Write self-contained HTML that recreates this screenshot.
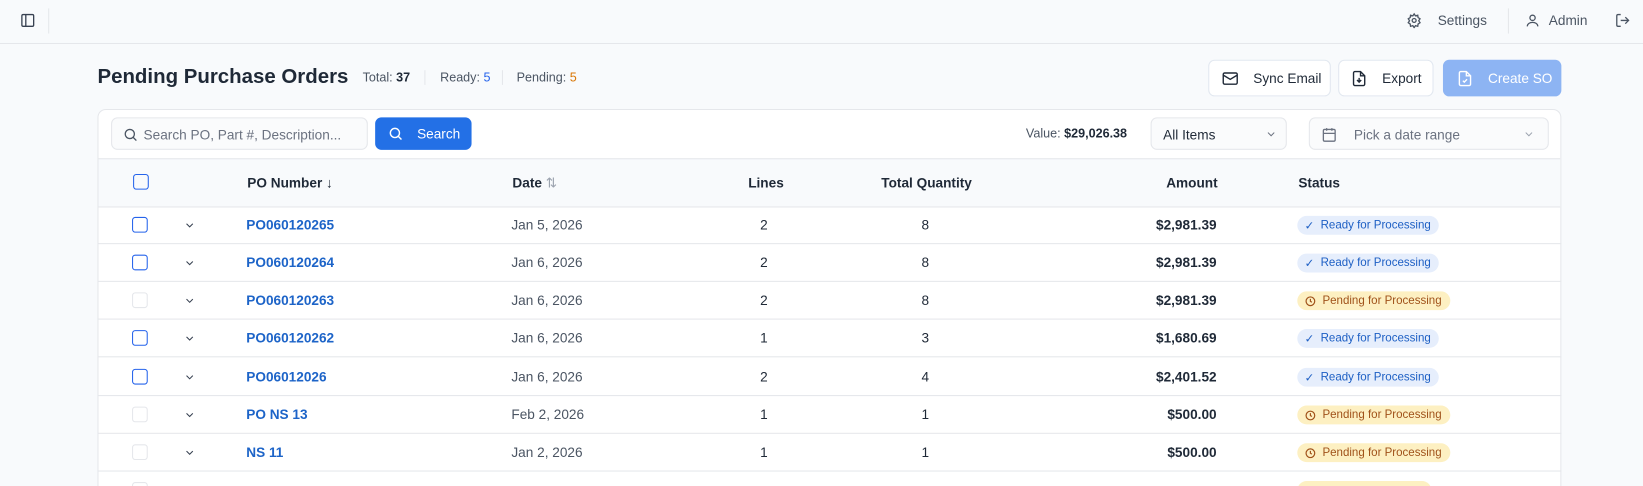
<!DOCTYPE html>
<html style="width:1643px;height:486px;overflow:hidden"><head><style>
*{box-sizing:border-box;margin:0;padding:0}
body{width:1643px;height:486px;overflow:hidden;background:#f8fafc;font-family:"Liberation Sans",sans-serif;color:#1f2937;font-size:13px;position:relative}
#w{position:absolute;left:0;top:0;width:1568px;height:464px;overflow:hidden;transform:scale(1.0479);transform-origin:0 0}
.abs{position:absolute}
.top{position:absolute;left:0;top:0;width:1568px;height:42px;border-bottom:1px solid #e5e7eb}
.btn{position:absolute;top:57px;height:35px;border:1px solid #e2e8f0;border-radius:6px;background:#fff;display:flex;align-items:center;font-size:13px;color:#1f2937}
.card{position:absolute;left:93px;top:104px;width:1397px;height:400px;background:#fff;border:1px solid #e5e7eb;border-radius:8px;overflow:hidden}
.hdr{position:absolute;left:0;top:46px;width:100%;height:47px;background:#f8fafc;border-top:1px solid #e5e7eb;border-bottom:1px solid #e5e7eb;font-weight:bold;font-size:13px;color:#1f2937}
.row{position:absolute;left:0;width:100%;height:36px;border-bottom:1px solid #e5e7eb}
.c{position:absolute;top:0;line-height:35px}
.cb{position:absolute;left:33px;top:10px;width:15px;height:15px;border:1.5px solid #2563eb;border-radius:3px}
.cb.d{border:1px solid #e5e7eb}
.po{left:142px;color:#1d64c8;font-weight:bold}
.dt{left:395px;color:#4b5563}
.ln{left:620px;width:32px;text-align:center}
.tq{left:760px;width:60px;text-align:center}
.am{left:960px;width:108px;text-align:right;font-weight:bold}
.badge{position:absolute;left:1145px;top:9px;height:18px;border-radius:9px;font-size:11px;display:flex;align-items:center;padding:0 8px 0 7px;gap:6px}
.r{background:#e6eefc;color:#1d5fc4}
.p{background:#fdf0c2;color:#a0521a}
</style></head><body><div id="w">
<div class="top">
 <svg class="abs" style="left:19px;top:12px" width="15" height="15" viewBox="0 0 24 24" fill="none" stroke="#374151" stroke-width="2"><rect x="3" y="3" width="18" height="18" rx="2"/><path d="M9 3v18"/></svg>
 <div class="abs" style="left:46px;top:8px;width:1px;height:24px;background:#e5e7eb"></div>
 <svg class="abs" style="left:1342px;top:12px" width="15" height="15" viewBox="0 0 24 24" fill="none" stroke="#4b5563" stroke-width="2"><circle cx="12" cy="12" r="3"/><path d="M12 2l2 3 3.5-1 .5 3.5 3 2-2 3 2 3-3 2-.5 3.5-3.5-1-2 3-2-3-3.5 1L6 17.5l-3-2 2-3-2-3 3-2L6.5 4 10 5z"/></svg>
 <div class="abs" style="left:1372px;top:12px;color:#4b5563">Settings</div>
 <div class="abs" style="left:1439px;top:8px;width:1px;height:24px;background:#e5e7eb"></div>
 <svg class="abs" style="left:1455px;top:12px" width="15" height="15" viewBox="0 0 24 24" fill="none" stroke="#4b5563" stroke-width="2"><circle cx="12" cy="8" r="4"/><path d="M4 21c0-4 4-6 8-6s8 2 8 6"/></svg>
 <div class="abs" style="left:1478px;top:12px;color:#4b5563">Admin</div>
 <svg class="abs" style="left:1541px;top:12px" width="15" height="15" viewBox="0 0 24 24" fill="none" stroke="#4b5563" stroke-width="2"><path d="M9 21H5a2 2 0 0 1-2-2V5a2 2 0 0 1 2-2h4M16 17l5-5-5-5M21 12H9"/></svg>
</div>
<div class="abs" style="left:93px;top:62px;font-size:19.5px;font-weight:bold;color:#1f2937">Pending Purchase Orders</div>
<div class="abs" style="left:346px;top:67px;font-size:12px;color:#4b5563">Total: <b style="color:#1f2937">37</b></div>
<div class="abs" style="left:405px;top:67px;width:1px;height:14px;background:#e5e7eb"></div>
<div class="abs" style="left:420px;top:67px;font-size:12px;color:#4b5563">Ready: <b style="color:#2563eb;font-weight:normal">5</b></div>
<div class="abs" style="left:479px;top:67px;width:1px;height:14px;background:#e5e7eb"></div>
<div class="abs" style="left:493px;top:67px;font-size:12px;color:#4b5563">Pending: <span style="color:#d97706">5</span></div>
<div class="btn" style="left:1153px;width:117px"><svg style="margin:0 14px 0 12px" width="16" height="16" viewBox="0 0 24 24" fill="none" stroke="#1f2937" stroke-width="2"><rect x="2" y="4" width="20" height="16" rx="2"/><path d="M22 7l-10 6L2 7"/></svg>Sync Email</div>
<div class="btn" style="left:1277px;width:91px"><svg style="margin:0 14px 0 11px" width="16" height="16" viewBox="0 0 24 24" fill="none" stroke="#1f2937" stroke-width="2"><path d="M14 2H6a2 2 0 0 0-2 2v16a2 2 0 0 0 2 2h12a2 2 0 0 0 2-2V8z"/><path d="M14 2v6h6M12 11v6M9 14l3 3 3-3"/></svg>Export</div>
<div class="btn" style="left:1377px;width:113px;background:#8db4f3;border-color:#8db4f3;color:#fff"><svg style="margin:0 14px 0 12px" width="16" height="16" viewBox="0 0 24 24" fill="none" stroke="#fff" stroke-width="2"><path d="M14 2H6a2 2 0 0 0-2 2v16a2 2 0 0 0 2 2h12a2 2 0 0 0 2-2V8z"/><path d="M14 2v6h6M9 15l2 2 4-4"/></svg>Create SO</div>
<div class="card">
 <div class="abs" style="left:12px;top:7px;width:245px;height:31px;border:1px solid #e5e7eb;border-radius:6px;background:#fafbfc"><svg class="abs" style="left:10px;top:8px" width="15" height="15" viewBox="0 0 24 24" fill="none" stroke="#4b5563" stroke-width="2"><circle cx="11" cy="11" r="7"/><path d="M21 21l-5-5"/></svg><span class="abs" style="left:30px;top:8px;color:#6b7280">Search PO, Part #, Description...</span></div>
 <div class="abs" style="left:264px;top:7px;width:92px;height:31px;border-radius:6px;background:#2370e6;color:#fff"><svg class="abs" style="left:12px;top:8px" width="15" height="15" viewBox="0 0 24 24" fill="none" stroke="#fff" stroke-width="2.2"><circle cx="11" cy="11" r="7"/><path d="M21 21l-5-5"/></svg><span class="abs" style="left:40px;top:8px">Search</span></div>
 <div class="abs" style="left:885px;top:15px;font-size:12px;color:#4b5563">Value: <b style="color:#1f2937">$29,026.38</b></div>
 <div class="abs" style="left:1004px;top:7px;width:130px;height:31px;border:1px solid #e5e7eb;border-radius:6px;background:#fafbfc"><span class="abs" style="left:11px;top:8px">All Items</span><svg class="abs" style="left:108px;top:9px" width="12" height="12" viewBox="0 0 24 24" fill="none" stroke="#6b7280" stroke-width="2"><path d="M6 9l6 6 6-6"/></svg></div>
 <div class="abs" style="left:1155px;top:7px;width:229px;height:31px;border:1px solid #e5e7eb;border-radius:6px;background:#fafbfc"><svg class="abs" style="left:11px;top:8px" width="15" height="15" viewBox="0 0 24 24" fill="none" stroke="#6b7280" stroke-width="2"><rect x="3" y="4" width="18" height="18" rx="2"/><path d="M16 2v4M8 2v4M3 10h18"/></svg><span class="abs" style="left:42px;top:8px;color:#6b7280">Pick a date range</span><svg class="abs" style="left:203px;top:9px" width="12" height="12" viewBox="0 0 24 24" fill="none" stroke="#9ca3af" stroke-width="2"><path d="M6 9l6 6 6-6"/></svg></div>
 <div class="hdr">
  <div class="cb" style="top:14px"></div>
  <div class="c po" style="color:#1f2937;line-height:45px">PO Number <span style="font-weight:normal">↓</span></div>
  <div class="c dt" style="color:#1f2937;line-height:45px">Date <span style="font-weight:normal;color:#9ca3af">⇅</span></div>
  <div class="c" style="left:620px;line-height:45px">Lines</div>
  <div class="c" style="left:747px;line-height:45px">Total Quantity</div>
  <div class="c" style="left:960px;width:108px;text-align:right;line-height:45px">Amount</div>
  <div class="c" style="left:1145px;line-height:45px">Status</div>
 </div>
</div>
<div class="abs" style="left:93px;top:197px;width:1397px">
 <div class="row" style="top:0"><div class="cb"></div><svg class="abs" style="left:82px;top:12px" width="12" height="12" viewBox="0 0 24 24" fill="none" stroke="#374151" stroke-width="2"><path d="M6 9l6 6 6-6"/></svg><div class="c po">PO060120265</div><div class="c dt">Jan 5, 2026</div><div class="c ln">2</div><div class="c tq">8</div><div class="c am">$2,981.39</div><div class="badge r">✓ <span>Ready for Processing</span></div></div>
 <div class="row" style="top:36px"><div class="cb"></div><svg class="abs" style="left:82px;top:12px" width="12" height="12" viewBox="0 0 24 24" fill="none" stroke="#374151" stroke-width="2"><path d="M6 9l6 6 6-6"/></svg><div class="c po">PO060120264</div><div class="c dt">Jan 6, 2026</div><div class="c ln">2</div><div class="c tq">8</div><div class="c am">$2,981.39</div><div class="badge r">✓ <span>Ready for Processing</span></div></div>
 <div class="row" style="top:72px"><div class="cb d"></div><svg class="abs" style="left:82px;top:12px" width="12" height="12" viewBox="0 0 24 24" fill="none" stroke="#374151" stroke-width="2"><path d="M6 9l6 6 6-6"/></svg><div class="c po">PO060120263</div><div class="c dt">Jan 6, 2026</div><div class="c ln">2</div><div class="c tq">8</div><div class="c am">$2,981.39</div><div class="badge p"><svg width="11" height="11" viewBox="0 0 24 24" fill="none" stroke="#a0521a" stroke-width="2.5"><circle cx="12" cy="12" r="9"/><path d="M12 7v5l3 2"/></svg><span>Pending for Processing</span></div></div>
 <div class="row" style="top:108px"><div class="cb"></div><svg class="abs" style="left:82px;top:12px" width="12" height="12" viewBox="0 0 24 24" fill="none" stroke="#374151" stroke-width="2"><path d="M6 9l6 6 6-6"/></svg><div class="c po">PO060120262</div><div class="c dt">Jan 6, 2026</div><div class="c ln">1</div><div class="c tq">3</div><div class="c am">$1,680.69</div><div class="badge r">✓ <span>Ready for Processing</span></div></div>
 <div class="row" style="top:145px"><div class="cb"></div><svg class="abs" style="left:82px;top:12px" width="12" height="12" viewBox="0 0 24 24" fill="none" stroke="#374151" stroke-width="2"><path d="M6 9l6 6 6-6"/></svg><div class="c po">PO06012026</div><div class="c dt">Jan 6, 2026</div><div class="c ln">2</div><div class="c tq">4</div><div class="c am">$2,401.52</div><div class="badge r">✓ <span>Ready for Processing</span></div></div>
 <div class="row" style="top:181px"><div class="cb d"></div><svg class="abs" style="left:82px;top:12px" width="12" height="12" viewBox="0 0 24 24" fill="none" stroke="#374151" stroke-width="2"><path d="M6 9l6 6 6-6"/></svg><div class="c po">PO NS 13</div><div class="c dt">Feb 2, 2026</div><div class="c ln">1</div><div class="c tq">1</div><div class="c am">$500.00</div><div class="badge p"><svg width="11" height="11" viewBox="0 0 24 24" fill="none" stroke="#a0521a" stroke-width="2.5"><circle cx="12" cy="12" r="9"/><path d="M12 7v5l3 2"/></svg><span>Pending for Processing</span></div></div>
 <div class="row" style="top:217px"><div class="cb d"></div><svg class="abs" style="left:82px;top:12px" width="12" height="12" viewBox="0 0 24 24" fill="none" stroke="#374151" stroke-width="2"><path d="M6 9l6 6 6-6"/></svg><div class="c po">NS 11</div><div class="c dt">Jan 2, 2026</div><div class="c ln">1</div><div class="c tq">1</div><div class="c am">$500.00</div><div class="badge p"><svg width="11" height="11" viewBox="0 0 24 24" fill="none" stroke="#a0521a" stroke-width="2.5"><circle cx="12" cy="12" r="9"/><path d="M12 7v5l3 2"/></svg><span>Pending for Processing</span></div></div>
 <div class="row" style="top:253px;border:none"><div class="cb d"></div><div class="badge p" style="width:128px"></div></div>
</div>
</div></body></html>
